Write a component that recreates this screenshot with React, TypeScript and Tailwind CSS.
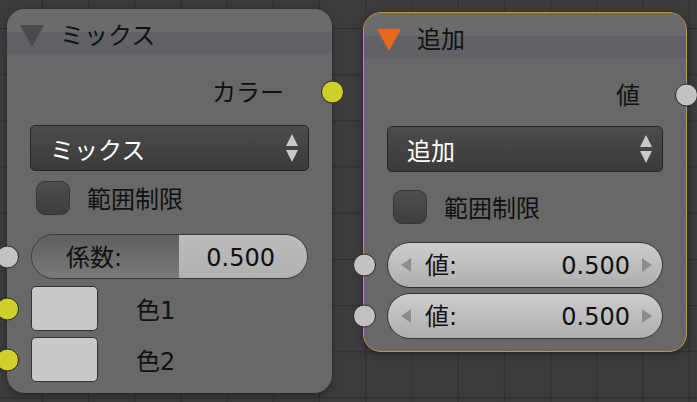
import { FC, ReactNode } from 'react';

const font = 'font-["DejaVu_Sans","Noto_Sans_CJK_JP",sans-serif]';

type SocketKind = 'yellow' | 'gray';

const Socket: FC<{ kind: SocketKind; side: 'left' | 'right' }> = ({ kind, side }) => (
  <div
    className={`absolute top-1/2 -translate-y-1/2 w-[23px] h-[23px] rounded-full border border-[#262626] ${
      kind === 'yellow' ? 'bg-[#cfcf2a]' : 'bg-[#c2c2c2]'
    } ${side === 'left' ? '-left-[11.5px]' : '-right-[11.5px]'}`}
  />
);

const Triangle: FC<{ color: string }> = ({ color }) => (
  <svg width="24" height="22" viewBox="0 0 24 22">
    <polygon points="0,0 24,0 12,22" fill={color} />
  </svg>
);

const Header: FC<{ title: string; triColor: string }> = ({ title, triColor }) => (
  <div className="h-[45px] flex items-start pl-[13px] pt-[16px] bg-[linear-gradient(to_bottom,#6b6b6b_0%,#6b6b6b_50%,#616369_52%,#5f6167_100%)]">
    <Triangle color={triColor} />
    <span className="ml-[16px] -mt-[6px] text-[24px] leading-[34px] text-[#111]">{title}</span>
  </div>
);

const Dropdown: FC<{ label: string }> = ({ label }) => (
  <div className="mx-[23px] h-[46px] flex items-center justify-between pl-[19px] pr-[9px] rounded-[5px] border border-[#262626] bg-[linear-gradient(to_bottom,#4c4c4c,#3a3a3a)] text-white text-[24px]">
    <span className="translate-y-[3px]">{label}</span>
    <svg width="14" height="30" viewBox="0 0 14 30">
      <polygon points="7,1 13,13 1,13" fill="#c8c8c8" />
      <polygon points="1,17 13,17 7,29" fill="#c8c8c8" />
    </svg>
  </div>
);

const Checkbox: FC<{ label: string }> = ({ label }) => (
  <div className="flex items-center ml-[29px] h-[34px]">
    <div className="w-[34px] h-[34px] rounded-[9px] border border-[#363636] bg-[linear-gradient(to_bottom,#4e4e4e,#3e3e3e)]" />
    <span className="ml-[17px] translate-y-[2px] text-[24px] text-[#111]">{label}</span>
  </div>
);

const Row: FC<{ className?: string; children: ReactNode }> = ({ className = '', children }) => (
  <div className={`relative ${className}`}>{children}</div>
);

const ValueField: FC<{ label: string; value: string }> = ({ label, value }) => (
  <Row className="h-[46px]">
    <Socket kind="gray" side="left" />
    <div className="mx-[23px] h-full flex items-center rounded-full border border-[#333] bg-[linear-gradient(to_bottom,#cdcdcd,#aeaeae)] text-[24px] text-[#111] pl-[13px] pr-[10px]">
      <svg width="10" height="14" viewBox="0 0 10 14">
        <polygon points="10,0 10,14 0,7" fill="#8c8c8c" />
      </svg>
      <span className="ml-[14px] translate-y-[1px]">{label}</span>
      <span className="ml-auto translate-y-[1px]">{value}</span>
      <svg className="ml-[12px]" width="10" height="14" viewBox="0 0 10 14">
        <polygon points="0,0 10,7 0,14" fill="#8c8c8c" />
      </svg>
    </div>
  </Row>
);

const Swatch: FC<{ label: string }> = ({ label }) => (
  <Row className="h-[45px] flex items-center">
    <Socket kind="yellow" side="left" />
    <div className="ml-[24px] w-[67px] h-[45px] rounded-[5px] border border-[#333] bg-[#c9c9c9]" />
    <span className="ml-[38px] translate-y-[2px] text-[24px] text-[#111]">{label}</span>
  </Row>
);

export default function App() {
  return (
    <div
      className={`relative w-[697px] h-[402px] overflow-hidden bg-[#3b3b3b] bg-[linear-gradient(to_right,#2e2e2e_1px,transparent_1px),linear-gradient(to_bottom,#2e2e2e_1px,transparent_1px)] bg-[size:46.2px_46.2px] bg-[position:42px_28px] ${font}`}
    >
      {/* Mix node */}
      <div className="absolute left-[7px] top-[9px] w-[325px] h-[384px] rounded-[18px] bg-[rgba(108,108,108,0.92)] shadow-[0_2px_6px_rgba(0,0,0,0.35)]">
        <div className="rounded-t-[18px] overflow-hidden">
          <Header title="ミックス" triColor="#4a4a4a" />
        </div>
        <Row className="mt-[15px] h-[46px] flex items-center justify-end pr-[48px]">
          <span className="translate-y-[1px] text-[24px] text-[#111]">カラー</span>
          <Socket kind="yellow" side="right" />
        </Row>
        <div className="mt-[10px]">
          <Dropdown label="ミックス" />
        </div>
        <div className="mt-[10px]">
          <Checkbox label="範囲制限" />
        </div>
        <Row className="mt-[19px] h-[45px]">
          <Socket kind="gray" side="left" />
          <div className="mx-[24px] h-full flex rounded-full border border-[#3a3a3a] overflow-hidden text-[24px] text-[#111]">
            <div className="w-[147px] flex items-center pl-[34px] pt-[2px] bg-[linear-gradient(to_bottom,#5f5f5f,#7a7a7a)]">
              係数:
            </div>
            <div className="flex-1 flex items-center justify-end pr-[32px] pt-[2px] bg-[linear-gradient(to_bottom,#bcbcbc,#b0b0b0)]">
              0.500
            </div>
          </div>
        </Row>
        <div className="mt-[7px] flex flex-col gap-[6px]">
          <Swatch label="色1" />
          <Swatch label="色2" />
        </div>
      </div>

      {/* Add node */}
      <div className="absolute left-[363px] top-[12px] w-[324px] h-[340px] rounded-[18px] border border-[#c98f4f] bg-[rgba(108,108,108,0.92)] shadow-[0_2px_6px_rgba(0,0,0,0.35)]">
        <div className="rounded-t-[17px] overflow-hidden">
          <Header title="追加" triColor="#e8691d" />
        </div>
        <Row className="mt-[14px] h-[46px] flex items-center justify-end pr-[46px]">
          <span className="translate-y-[1px] text-[24px] text-[#111]">値</span>
          <Socket kind="gray" side="right" />
        </Row>
        <div className="mt-[8px]">
          <Dropdown label="追加" />
        </div>
        <div className="mt-[18px]">
          <Checkbox label="範囲制限" />
        </div>
        <div className="mt-[18px] flex flex-col gap-[5px]">
          <ValueField label="値:" value="0.500" />
          <ValueField label="値:" value="0.500" />
        </div>
      </div>
    </div>
  );
}
